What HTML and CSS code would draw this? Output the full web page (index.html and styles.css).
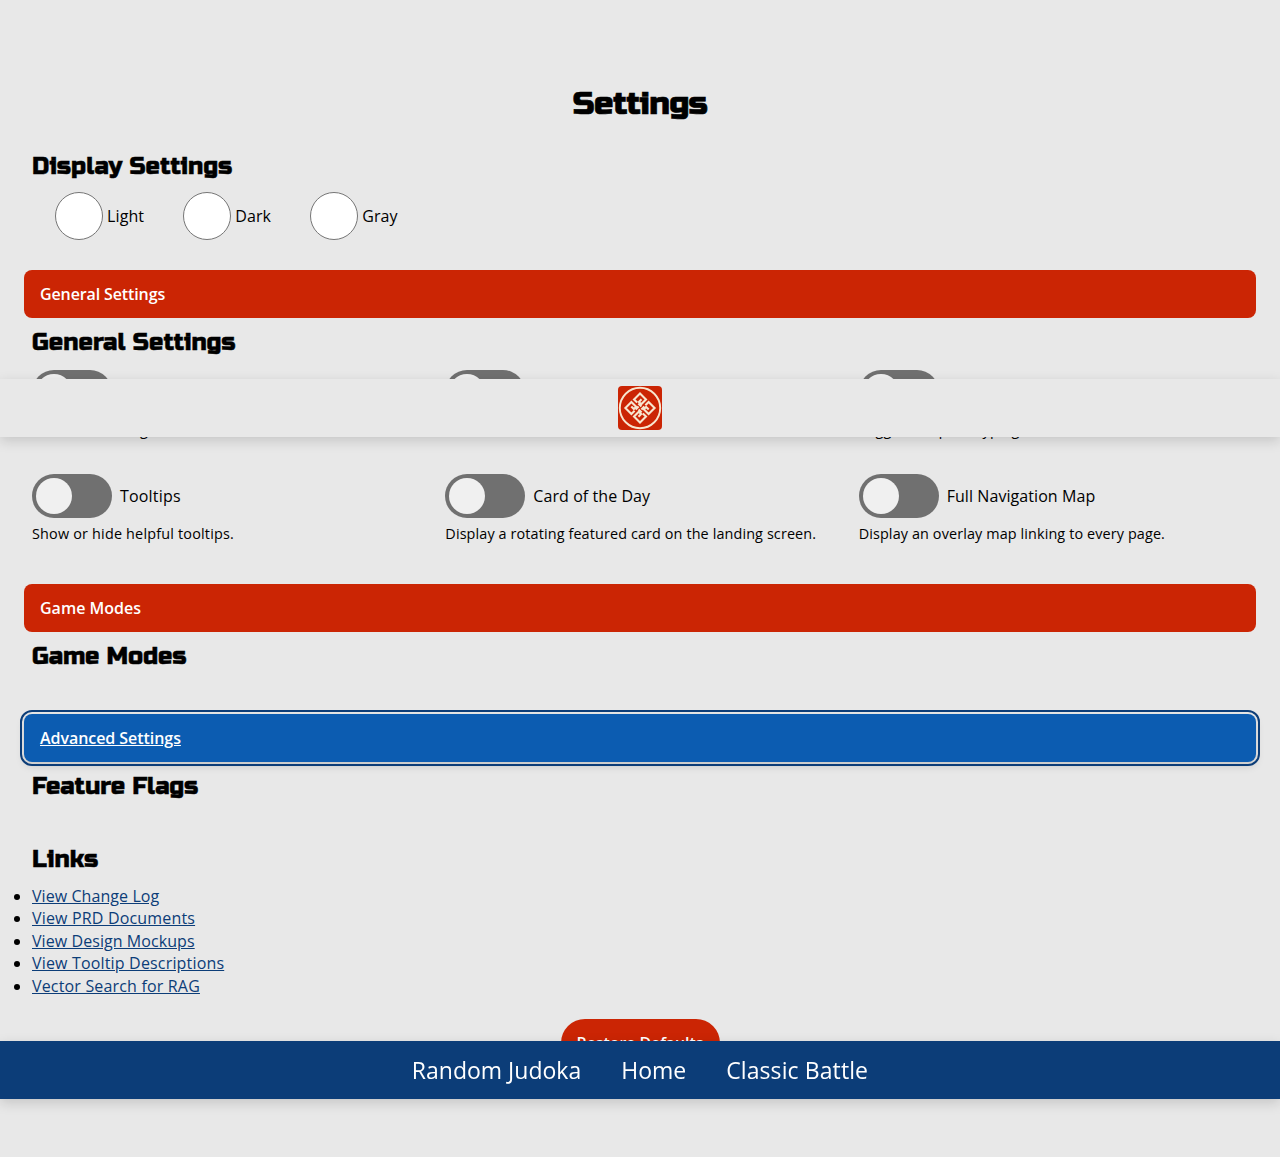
FILE: index.html
```html
<!DOCTYPE html>
<html lang="en">
<head>
<meta charset="utf-8">
<title>Settings</title>
<link rel="stylesheet" href="styles.css">
</head>
<body>
<header class="header">
  <svg class="logo" viewBox="0 0 44 44" aria-label="Logo">
    <rect width="44" height="44" rx="4" fill="#cb2504"/>
    <g fill="none" stroke="#f7e6cf">
      <circle cx="22" cy="22" r="20.2" stroke-width="1.9"/>
      <g stroke-width="2.1">
        <path id="loop" d="M23.4 20.6l-3-3M19.2 16.6l-3.2-3.2 6-6 6 6-4.8 4.8-2.3-2.3 2.6-2.6"/>
        <use href="#loop" transform="rotate(90 22 22)"/>
        <use href="#loop" transform="rotate(180 22 22)"/>
        <use href="#loop" transform="rotate(270 22 22)"/>
      </g>
    </g>
  </svg>
</header>
<main class="page">
  <h1 class="title">Settings</h1>
  <section class="section">
    <h2 class="heading">Display Settings</h2>
    <div class="modes">
      <label class="mode"><input class="radio" type="radio" name="mode">Light</label>
      <label class="mode"><input class="radio" type="radio" name="mode">Dark</label>
      <label class="mode"><input class="radio" type="radio" name="mode">Gray</label>
    </div>
  </section>
  <button class="bar bar-general">General Settings</button>
  <section class="section general">
    <h2 class="heading">General Settings</h2>
    <div class="grid">
      <div class="item"><label class="toggle"><span class="switch"></span>Sound</label><p class="desc">Mute or enable game sounds.</p></div>
      <div class="item"><label class="toggle"><span class="switch"></span>Motion Effects</label><p class="desc">Enable animations and transitions.</p></div>
      <div class="item"><label class="toggle"><span class="switch"></span>Typewriter Effect</label><p class="desc">Toggle the quote typing animation.</p></div>
      <div class="item"><label class="toggle toggle-wide"><span class="switch"></span>Tooltips</label><p class="desc desc-wide">Show or hide helpful tooltips.</p></div>
      <div class="item"><label class="toggle"><span class="switch"></span>Card of the Day</label><p class="desc">Display a rotating featured card on the landing screen.</p></div>
      <div class="item"><label class="toggle"><span class="switch"></span>Full Navigation Map</label><p class="desc">Display an overlay map linking to every page.</p></div>
    </div>
  </section>
  <button class="bar">Game Modes</button>
  <section class="section modes-panel"><h2 class="heading heading-tight">Game Modes</h2></section>
  <button class="bar bar-active">Advanced Settings</button>
  <section class="section flags"><h2 class="heading heading-tight">Feature Flags</h2></section>
  <section class="section">
    <h2 class="heading">Links</h2>
    <ul class="links">
      <li class="snug"><a href="#">View Change Log</a></li>
      <li><a href="#">View PRD Documents</a></li>
      <li class="snug"><a href="#">View Design Mockups</a></li>
      <li><a href="#">View Tooltip Descriptions</a></li>
      <li><a href="#">Vector Search for RAG</a></li>
    </ul>
  </section>
  <button class="restore">Restore Defaults</button>
</main>
<nav class="footer"><a href="#">Random Judoka</a><a href="#">Home</a><a class="battle" href="#">Classic Battle</a></nav>
</body>
</html>
```
FILE: styles.css
```css
* { box-sizing: border-box; }
body { margin: 0; height: 1157px; overflow: hidden; background: #e8e8e8; color: #000; font: 16px/22.4px "Open Sans", sans-serif; }
.page { display: flex; flex-direction: column; padding: 80px 24px 0; }
.title, .heading { margin: 0; font-family: "Russo One", Inter, sans-serif; font-weight: 400; -webkit-text-stroke: 0.45px #000; }
.title { font-size: 32.5px; line-height: 48px; text-align: center; letter-spacing: -0.5px; -webkit-text-stroke-width: 0.7px; }
.heading { font-size: 24px; line-height: 34px; padding-top: 2px; letter-spacing: 0.05px; }
.heading-tight { letter-spacing: -0.08px; }
.section { padding: 0 8px; }
.title + .section { margin-top: 20px; height: 122px; }
.modes { display: flex; gap: 39px; margin: 8px 0 0 23px; }
.mode { display: flex; align-items: center; gap: 4px; letter-spacing: 0.12px; }
.radio { appearance: none; width: 48px; height: 48px; margin: 0; border: 1px solid #767676; border-radius: 50%; background: #fff; }
.bar { height: 48px; flex: none; border: 0; border-radius: 8px; padding: 0 16px; text-align: left; color: #fff; background: #cb2504; font: 600 16px "Open Sans", sans-serif; }
.bar-general { letter-spacing: -0.12px; }
.bar-active { letter-spacing: -0.05px; background: #0c5cb1; text-decoration: underline; outline: 2px solid #0c3d78; outline-offset: 2px; box-shadow: 0 4px 8px rgba(0,0,0,.15); }
.general { padding-top: 6px; height: 266px; }
.grid { display: grid; grid-template-columns: repeat(3, 1fr); grid-auto-rows: 80px; gap: 24px; margin-top: 10px; }
.toggle { display: flex; align-items: center; gap: 8px; height: 44px; letter-spacing: 0.07px; }
.toggle-wide { letter-spacing: 0.18px; }
.switch { width: 80px; height: 44px; padding: 4px; border-radius: 22px; background: #707070; }
.switch::before { content: ""; display: block; width: 36px; height: 36px; border-radius: 50%; background: #f0f0f0; }
.desc { margin: 6px 0 0; font-size: 14.4px; line-height: 20px; letter-spacing: 0.12px; }
.desc-wide { letter-spacing: 0.19px; }
.modes-panel { padding-top: 6px; height: 82px; }
.flags { padding-top: 6px; height: 79px; }
.links { margin: 8px 0 0; padding: 0; letter-spacing: 0.17px; }
.snug { letter-spacing: 0.07px; }
.links a { color: #0c3d78; }
.restore { align-self: center; width: 159px; height: 48px; margin-top: 22px; border: 0; border-radius: 24px; background: #cb2504; color: #fff; padding: 0; font: 600 16px "Open Sans", sans-serif; letter-spacing: -0.1px; }
.header, .footer { position: fixed; left: 0; right: 0; z-index: 2; height: 58px; display: flex; justify-content: center; align-items: center; box-shadow: 0 4px 12px rgba(0,0,0,.15); }
.header { top: 379px; background: #e8e8e8; }
.logo { width: 44px; height: 44px; }
.footer { top: 1041px; gap: 40px; background: #0c3d78; font-size: 23px; line-height: 58px; }
.footer a { color: #fff; text-decoration: none; }
.battle { letter-spacing: 0.1px; }
```
